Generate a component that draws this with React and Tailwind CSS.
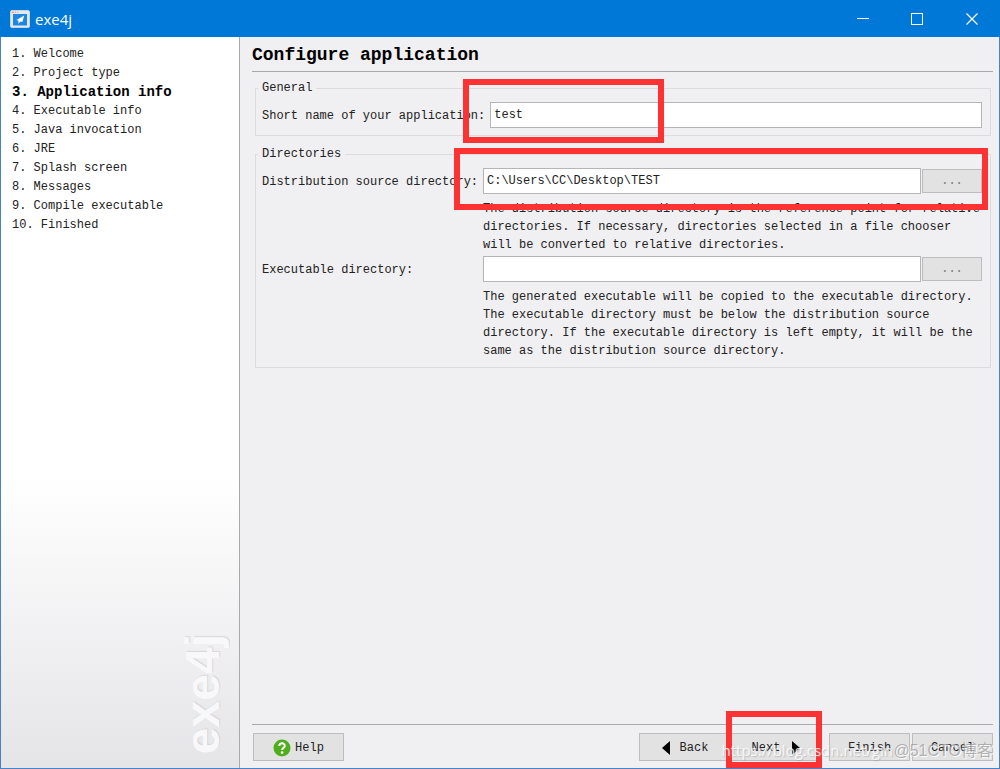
const steps = [
  "Welcome",
  "Project type",
  "Application info",
  "Executable info",
  "Java invocation",
  "JRE",
  "Splash screen",
  "Messages",
  "Compile executable",
  "Finished",
]

const buttonClass =
  "flex h-7 items-center justify-center border border-[#bdbdbf] bg-[#e2e2e3] pt-px text-[#222]"
const inputClass =
  "h-[26px] w-full min-w-0 flex-1 border border-[#b5b5b8] bg-white px-[3px] text-[#222] outline-none"

// Red frame drawn around the control that the reader has to fill in or press
function Highlight({ className }) {
  return (
    <div className={`pointer-events-none absolute z-10 border-6 border-[#fd3333] ${className}`} />
  )
}

function TitleBar() {
  return (
    <header className="flex h-[37px] shrink-0 items-center bg-[#0078d7] pl-[10px] text-white">
      <svg width="20" height="18" viewBox="0 0 20 18">
        <rect x="0.5" y="0.5" width="19" height="17" rx="1.5" fill="#e3e9ef" stroke="#c3d3e2" />
        <circle cx="3" cy="2.2" r="0.8" fill="#e06a5a" />
        <circle cx="5.4" cy="2.2" r="0.8" fill="#e8a08a" />
        <circle cx="7.8" cy="2.2" r="0.8" fill="#d9b7a8" />
        <rect x="3" y="4" width="14" height="11.5" fill="#1f86e0" />
        <path d="M14.2 5.4 L12.4 12 L10.4 11.4 L8.2 13.8 L8.6 10.8 L6.4 10 Z" fill="#fff" />
      </svg>
      <h1 className="ml-[5px] flex-1 font-['Open_Sans','Noto_Sans',sans-serif] text-[15px] leading-5">
        exe4j
      </h1>
      <button aria-label="Minimize" className="flex h-full w-[54px] items-center justify-center">
        <svg width="12" height="12" viewBox="0 0 12 12" stroke="#fff">
          <path d="M0 5.5H12" />
        </svg>
      </button>
      <button aria-label="Maximize" className="flex h-full w-[54px] items-center justify-center">
        <svg width="12" height="12" viewBox="0 0 12 12" fill="none" stroke="#fff">
          <rect x="0.5" y="0.5" width="11" height="11" />
        </svg>
      </button>
      <button aria-label="Close" className="flex h-full w-[56px] items-center justify-center">
        <svg width="12" height="12" viewBox="0 0 12 12" stroke="#fff" strokeWidth="1.2">
          <path d="M0.5 0.5 11.5 11.5M11.5 0.5 0.5 11.5" />
        </svg>
      </button>
    </header>
  )
}

function Sidebar() {
  return (
    <aside className="flex w-[239px] shrink-0 flex-col justify-between border-r border-[#a9a9ab] bg-linear-to-b from-white from-60% to-[#e5e5e8]">
      <ol className="pt-2 pl-[11px]">
        {steps.map((step, index) => (
          <li
            key={step}
            className={
              step === "Application info"
                ? "h-[19px] text-[14px] leading-[19px] font-bold whitespace-pre text-black"
                : "h-[19px] leading-[19px] whitespace-pre"
            }
          >
            {index + 1}. {step}
          </li>
        ))}
      </ol>
      <div className="mr-3 mb-[14px] rotate-180 self-end font-['Liberation_Sans',sans-serif] text-[48px] leading-[48px] font-bold text-[#f8f8fa] [text-shadow:1px_1px_1px_#d6d6da] [writing-mode:vertical-rl]">
        exe4j
      </div>
    </aside>
  )
}

function Group({ title, children }) {
  return (
    <fieldset className="border border-[#dcdcde] pt-[6px] pr-2 pb-[7px] pl-[6px]">
      <legend className="-ml-1 px-1 leading-4">{title}</legend>
      {children}
    </fieldset>
  )
}

function DirectoryRow({ id, label, value, help, highlighted }) {
  return (
    <div className="grid grid-cols-[221px_1fr]">
      <label htmlFor={id} className="leading-7">
        {label}
      </label>
      <div>
        <div className="relative flex items-center gap-px">
          <input id={id} type="text" defaultValue={value} className={inputClass} />
          <button
            aria-label="Browse"
            className="h-6 w-[60px] border border-[#bdbdbf] bg-[#e2e2e3] text-[#777]"
          >
            ...
          </button>
          {highlighted && <Highlight className="-top-5 -right-[6px] -bottom-4 -left-[29px]" />}
        </div>
        <p className="pt-[6px] leading-[18px]">{help}</p>
      </div>
    </div>
  )
}

function Footer() {
  return (
    <footer className="relative flex border-t border-[#a9a9ab] pt-2 pb-[7px]">
      <button className={`${buttonClass} ml-px w-[91px] gap-1`}>
        <svg width="18" height="18" viewBox="0 0 18 18">
          <circle cx="9" cy="9" r="8.5" fill="#4fae1c" />
          <path
            d="M6.3 7C6.3 3.4 11.8 3.5 11.8 6.8C11.8 8.9 9.1 8.9 9.1 11"
            fill="none"
            stroke="#fff"
            strokeWidth="2"
          />
          <circle cx="9.1" cy="13.6" r="1.3" fill="#fff" />
        </svg>
        Help
      </button>
      <div className="ml-auto flex">
        <button className={`${buttonClass} w-[92px] gap-[10px]`}>
          <svg width="8" height="14" viewBox="0 0 8 14">
            <path d="M8 0V14L0 7Z" />
          </svg>
          Back
        </button>
        <div className="relative mr-2">
          <button className={`${buttonClass} w-[90px] gap-3`}>
            Next
            <svg width="8" height="14" viewBox="0 0 8 14">
              <path d="M0 0V14L8 7Z" />
            </svg>
          </button>
          <Highlight className="-top-[22px] -right-[1px] -bottom-[7px] -left-[5px]" />
        </div>
        <button className={`${buttonClass} mr-[2px] w-[81px]`}>Finish</button>
        <button className={`${buttonClass} w-[81px]`}>Cancel</button>
      </div>
      {/* watermarks printed over the buttons */}
      <span className="pointer-events-none absolute right-[100px] bottom-2 z-20 font-['Open_Sans',sans-serif] text-[15px] leading-5 text-white/80 [text-shadow:1px_1px_1px_#99999980]">
        https://blog.csdn.net/gin
      </span>
      <span className="pointer-events-none absolute right-0 bottom-[7px] z-20 font-['Liberation_Sans','Noto_Sans_CJK_SC',sans-serif] text-[16px] leading-5 text-[#888]/60 [text-shadow:1px_1px_1px_#ffffff]">
        @51CTO博客
      </span>
    </footer>
  )
}

function App() {
  return (
    <div className="flex min-h-screen flex-col bg-[#f0eff1] font-['Liberation_Mono',monospace] text-[12px] text-[#222]">
      <TitleBar />
      <div className="flex flex-1 border-x border-b border-[#4484cc]">
        <Sidebar />
        <main className="flex min-w-0 flex-1 flex-col pr-[6px] pl-3">
          <h2 className="border-b border-[#a9a9ab] pt-[6px] pb-1 text-[18px] leading-6 font-bold text-black">
            Configure application
          </h2>
          <div className="flex flex-1 flex-col gap-[10px] pt-2 pr-[2px] pl-[3px]">
            <Group title="General">
              <div className="flex gap-[5px]">
                <label htmlFor="short-name" className="leading-7 -mb-[2px] whitespace-nowrap">
                  Short name of your application:
                </label>
                <div className="relative flex min-w-0 flex-1 self-start">
                  <input id="short-name" type="text" defaultValue="test" className={inputClass} />
                  <Highlight className="-top-[23px] -bottom-[15px] -left-[27px] w-[201px]" />
                </div>
              </div>
            </Group>
            <Group title="Directories">
              <div className="flex flex-col gap-[2px]">
                <DirectoryRow
                  id="source-dir"
                  label="Distribution source directory:"
                  value="C:\Users\CC\Desktop\TEST"
                  help="The distribution source directory is the reference point for relative directories. If necessary, directories selected in a file chooser will be converted to relative directories."
                  highlighted
                />
                <DirectoryRow
                  id="executable-dir"
                  label="Executable directory:"
                  value=""
                  help="The generated executable will be copied to the executable directory. The executable directory must be below the distribution source directory. If the executable directory is left empty, it will be the same as the distribution source directory."
                />
              </div>
            </Group>
          </div>
          <Footer />
        </main>
      </div>
    </div>
  )
}

export default App
